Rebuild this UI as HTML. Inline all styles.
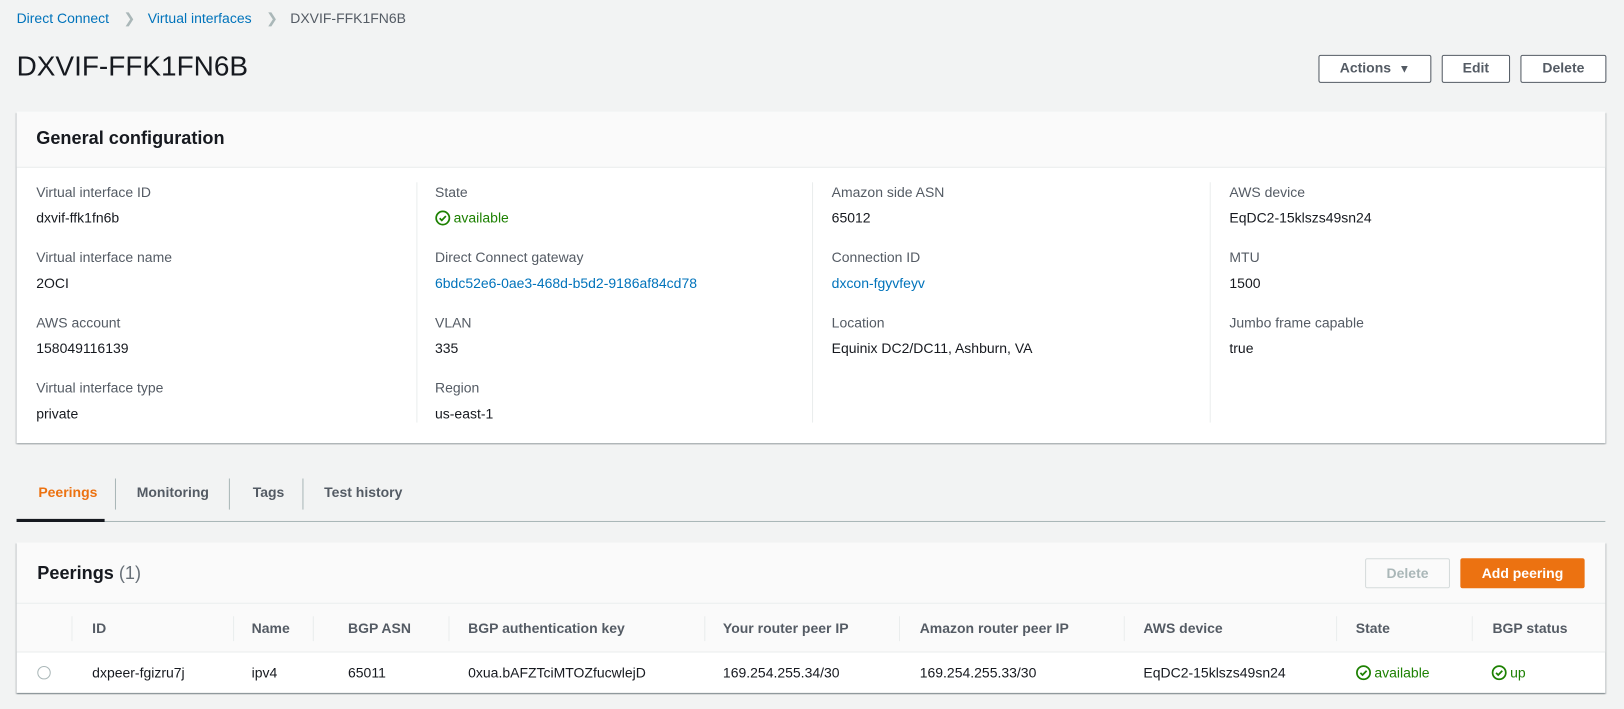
<!DOCTYPE html>
<html><head><meta charset="utf-8"><style>
*{box-sizing:border-box;margin:0;padding:0}
body{width:1624px;height:709px;background:#f2f3f3;font-family:"Liberation Sans",Arial,sans-serif;font-size:13.5px;color:#16191f;position:relative;overflow:hidden}
.wrap{position:absolute;left:0;top:0;width:1568px;height:685px;transform:scale(1.03571);transform-origin:0 0}
.a{position:absolute;white-space:nowrap}
.link{color:#0073bb}
.lbl{color:#545b64}
.btn{position:absolute;border:1px solid #545b64;background:#fff;border-radius:2px;font-weight:bold;color:#545b64;text-align:center;line-height:24px;font-size:13.5px}
.panel{position:absolute;left:16px;width:1534px;background:#fff;box-shadow:0 1px 1px 0 rgba(0,28,36,.3),1px 1px 1px 0 rgba(0,28,36,.15),-1px 1px 1px 0 rgba(0,28,36,.15)}
.vd{position:absolute;width:1px;background:#eaeded}
.ok{color:#1d8102}
.ok svg{vertical-align:-3px;margin-right:3px}
.th{position:absolute;top:16px;font-weight:bold;color:#545b64}
.hs{position:absolute;top:12px;height:24px;width:1px;background:#eaeded}
</style></head><body><div class="wrap">
<div class="a" style="left:16px;top:10px"><span class="link">Direct Connect</span><span style="color:#aab7b8;margin:0 12px 0 14px">&#x276F;</span><span class="link">Virtual interfaces</span><span style="color:#aab7b8;margin:0 12px 0 14px">&#x276F;</span><span style="color:#545b64">DXVIF-FFK1FN6B</span></div>
<div class="a" style="left:16px;top:49px;font-size:27px">DXVIF-FFK1FN6B</div>
<div class="btn" style="left:1273px;top:53px;width:109px;height:27px">Actions &nbsp;<span style="font-size:11px">&#9660;</span></div>
<div class="btn" style="left:1392px;top:53px;width:66px;height:27px">Edit</div>
<div class="btn" style="left:1468px;top:53px;width:83px;height:27px">Delete</div>

<div class="panel" style="top:108px;height:320px">
 <div style="height:54px;background:#fafafa;border-bottom:1px solid #eaeded"></div>
 <div class="a" style="left:19px;top:15px;font-size:17.5px;font-weight:bold">General configuration</div>
 <div class="vd" style="left:386px;top:68px;height:232px"></div>
 <div class="vd" style="left:768px;top:68px;height:232px"></div>
 <div class="vd" style="left:1152px;top:68px;height:232px"></div>
 <div class="a lbl" style="left:19px;top:70px">Virtual interface ID</div><div class="a" style="left:19px;top:95px">dxvif-ffk1fn6b</div>
 <div class="a lbl" style="left:19px;top:133px">Virtual interface name</div><div class="a" style="left:19px;top:158px">2OCI</div>
 <div class="a lbl" style="left:19px;top:196px">AWS account</div><div class="a" style="left:19px;top:221px">158049116139</div>
 <div class="a lbl" style="left:19px;top:259px">Virtual interface type</div><div class="a" style="left:19px;top:284px">private</div>

 <div class="a lbl" style="left:404px;top:70px">State</div><div class="a ok" style="left:404px;top:95px"><svg width="15" height="15" viewBox="0 0 16 16"><circle cx="8" cy="8" r="6.8" fill="none" stroke="#1d8102" stroke-width="1.8"/><path d="M4.8 8.2l2.2 2.2 4.2-4.4" fill="none" stroke="#1d8102" stroke-width="1.8"/></svg>available</div>
 <div class="a lbl" style="left:404px;top:133px">Direct Connect gateway</div><div class="a link" style="left:404px;top:158px">6bdc52e6-0ae3-468d-b5d2-9186af84cd78</div>
 <div class="a lbl" style="left:404px;top:196px">VLAN</div><div class="a" style="left:404px;top:221px">335</div>
 <div class="a lbl" style="left:404px;top:259px">Region</div><div class="a" style="left:404px;top:284px">us-east-1</div>

 <div class="a lbl" style="left:787px;top:70px">Amazon side ASN</div><div class="a" style="left:787px;top:95px">65012</div>
 <div class="a lbl" style="left:787px;top:133px">Connection ID</div><div class="a link" style="left:787px;top:158px">dxcon-fgyvfeyv</div>
 <div class="a lbl" style="left:787px;top:196px">Location</div><div class="a" style="left:787px;top:221px">Equinix DC2/DC11, Ashburn, VA</div>

 <div class="a lbl" style="left:1171px;top:70px">AWS device</div><div class="a" style="left:1171px;top:95px">EqDC2-15klszs49sn24</div>
 <div class="a lbl" style="left:1171px;top:133px">MTU</div><div class="a" style="left:1171px;top:158px">1500</div>
 <div class="a lbl" style="left:1171px;top:196px">Jumbo frame capable</div><div class="a" style="left:1171px;top:221px">true</div>
</div>

<div class="a" style="left:37px;top:468px;font-weight:bold;color:#ec7211">Peerings</div>
<div class="a" style="left:132px;top:468px;font-weight:bold;color:#545b64">Monitoring</div>
<div class="a" style="left:244px;top:468px;font-weight:bold;color:#545b64">Tags</div>
<div class="a" style="left:313px;top:468px;font-weight:bold;color:#545b64">Test history</div>
<div class="a" style="left:111px;top:462px;width:1px;height:30px;background:#aab7b8"></div>
<div class="a" style="left:221px;top:462px;width:1px;height:30px;background:#aab7b8"></div>
<div class="a" style="left:292px;top:462px;width:1px;height:30px;background:#aab7b8"></div>
<div class="a" style="left:16px;top:503px;width:1534px;height:1px;background:#aab7b8"></div>
<div class="a" style="left:16px;top:501px;width:85px;height:3px;background:#16191f"></div>

<div class="panel" style="top:524px;height:145px">
 <div style="height:59px;background:#fafafa;border-bottom:1px solid #eaeded"></div>
 <div class="a" style="left:20px;top:19px;font-size:17.5px;font-weight:bold">Peerings <span style="font-weight:normal;color:#687078">(1)</span></div>
 <div class="a" style="left:1302px;top:15px;width:82px;height:29px;border:1px solid #d5dbdb;border-radius:2px;color:#aab7b8;font-weight:bold;text-align:center;line-height:27px">Delete</div>
 <div class="a" style="left:1394px;top:15px;width:120px;height:29px;background:#ec7211;border-radius:2px;color:#fff;font-weight:bold;text-align:center;line-height:29px">Add peering</div>
 <div style="position:absolute;top:59px;left:0;width:1534px;height:47px;background:#fafafa;border-bottom:1px solid #eaeded">
  <div class="hs" style="left:53px"></div><div class="hs" style="left:209px"></div><div class="hs" style="left:286px"></div><div class="hs" style="left:417px"></div><div class="hs" style="left:664px"></div><div class="hs" style="left:852px"></div><div class="hs" style="left:1069px"></div><div class="hs" style="left:1274px"></div><div class="hs" style="left:1405px"></div>
  <div class="th" style="left:73px">ID</div><div class="th" style="left:227px">Name</div><div class="th" style="left:320px">BGP ASN</div><div class="th" style="left:436px">BGP authentication key</div><div class="th" style="left:682px">Your router peer IP</div><div class="th" style="left:872px">Amazon router peer IP</div><div class="th" style="left:1088px">AWS device</div><div class="th" style="left:1293px">State</div><div class="th" style="left:1425px">BGP status</div>
 </div>
 <div class="a" style="left:20px;top:119px;width:13px;height:13px;border:1px solid #aab7b8;border-radius:50%"></div>
 <div class="a" style="left:73px;top:118px">dxpeer-fgizru7j</div>
 <div class="a" style="left:227px;top:118px">ipv4</div>
 <div class="a" style="left:320px;top:118px">65011</div>
 <div class="a" style="left:436px;top:118px">0xua.bAFZTciMTOZfucwlejD</div>
 <div class="a" style="left:682px;top:118px">169.254.255.34/30</div>
 <div class="a" style="left:872px;top:118px">169.254.255.33/30</div>
 <div class="a" style="left:1088px;top:118px">EqDC2-15klszs49sn24</div>
 <div class="a ok" style="left:1293px;top:118px"><svg width="15" height="15" viewBox="0 0 16 16"><circle cx="8" cy="8" r="6.8" fill="none" stroke="#1d8102" stroke-width="1.8"/><path d="M4.8 8.2l2.2 2.2 4.2-4.4" fill="none" stroke="#1d8102" stroke-width="1.8"/></svg>available</div>
 <div class="a ok" style="left:1424px;top:118px"><svg width="15" height="15" viewBox="0 0 16 16"><circle cx="8" cy="8" r="6.8" fill="none" stroke="#1d8102" stroke-width="1.8"/><path d="M4.8 8.2l2.2 2.2 4.2-4.4" fill="none" stroke="#1d8102" stroke-width="1.8"/></svg>up</div>
</div>
</div></body></html>
